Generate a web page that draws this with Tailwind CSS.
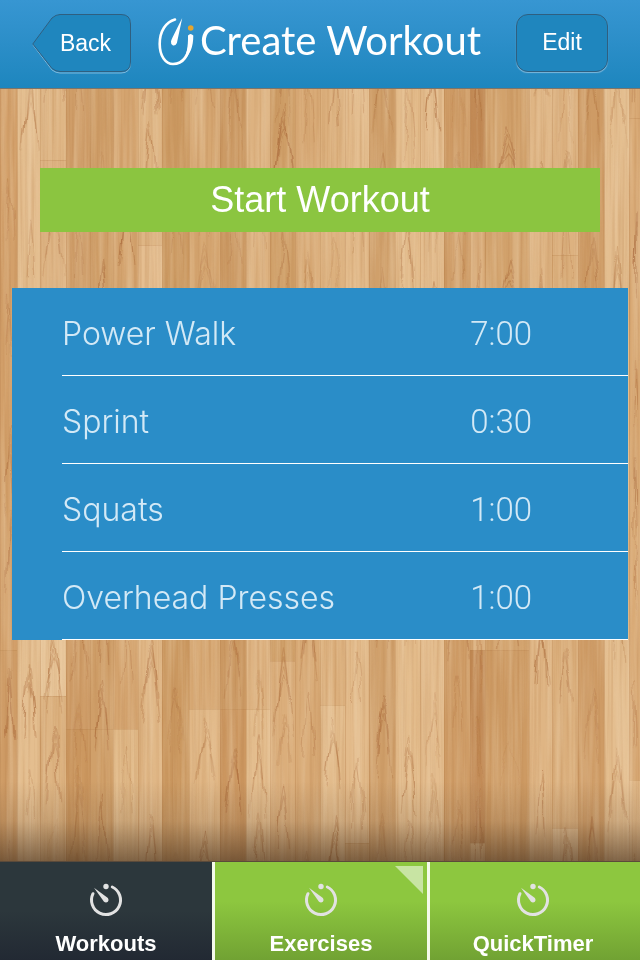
<!DOCTYPE html>
<html lang="en">
<head>
<meta charset="utf-8">
<meta name="viewport" content="width=device-width, initial-scale=1">
<title>Create Workout</title>
<script src="https://cdn.jsdelivr.net/npm/@tailwindcss/browser@4"></script>
</head>
<body class="relative isolate flex min-h-screen flex-col bg-[#dcb07c] font-['Liberation_Sans',Arial,sans-serif] text-white">

<!-- Wooden floor backdrop -->
<svg class="absolute inset-0 -z-10 h-full w-full" viewBox="0 0 640 960" preserveAspectRatio="xMidYMid slice" aria-hidden="true">
  <defs>
    <filter id="fine" x="0" y="0" width="100%" height="100%" color-interpolation-filters="sRGB">
      <feTurbulence type="fractalNoise" baseFrequency="0.35 0.006" numOctaves="3" seed="4"/>
      <feColorMatrix values="0 0 0 0 0.70  0 0 0 0 0.48  0 0 0 0 0.27  0.6 0 0 0 -0.24"/>
    </filter>
    <filter id="pale" x="0" y="0" width="100%" height="100%" color-interpolation-filters="sRGB">
      <feTurbulence type="fractalNoise" baseFrequency="0.15 0.006" numOctaves="3" seed="11"/>
      <feColorMatrix values="0 0 0 0 0.94  0 0 0 0 0.84  0 0 0 0 0.70  0 0.8 0 0 -0.31"/>
    </filter>
    <filter id="warp" x="0" y="0" width="100%" height="100%">
      <feTurbulence type="fractalNoise" baseFrequency="0.05 0.025" numOctaves="2" seed="7"/>
      <feDisplacementMap in="SourceGraphic" scale="12" xChannelSelector="R" yChannelSelector="G"/>
    </filter>
  </defs>
  <g id="planks"></g>
  <g id="rings" fill="none" stroke="#a9693a" filter="url(#warp)"></g>
  <rect width="640" height="960" filter="url(#fine)"/>
  <rect width="640" height="960" filter="url(#pale)"/>
</svg>

<header class="flex h-[89px] items-start gap-[27px] border-b border-[#7d7468] bg-linear-to-b from-[#3796d2] to-[#1d86be] px-8 pt-3.5">
  <button type="button" class="relative h-[58px] w-[99px] shrink-0 pl-2 text-[23px]">
    <svg class="absolute inset-0" width="99" height="60" viewBox="0 0 99 60" aria-hidden="true">
      <path d="M1 31 L20 5 Q24 1.500 28 1.500 H89 Q98.500 1.500 98.500 11 V49 Q98.500 59 89 59 H28 Q24 59 20 56 Z" fill="none" stroke="#7db8dc" stroke-width="1"/>
      <path d="M.8 30 L20 4 Q24 .5 28 .5 H89 Q98.500 .5 98.500 10 V48 Q98.500 57.500 89 57.500 H28 Q24 57.500 20 54.500 Z" fill="#1f86be" stroke="#2f5f80" stroke-width="1"/>
    </svg>
    <span class="relative">Back</span>
  </button>
  <div class="flex flex-1 items-start gap-1">
    <svg class="mt-0.5 shrink-0" width="38" height="52" viewBox="0 0 38 52" aria-hidden="true">
      <path d="M17 3.500 C8 6 1.700 15 1.700 28 C1.700 40 7.500 48 15 48 C25 48 31 39 32.500 24" fill="none" stroke="#fff" stroke-width="2.600" stroke-linecap="round"/>
      <path d="M30 19.500 Q32.500 16.500 35.300 19.500 C35.300 31 32 39 25.500 44 C28.500 39 30.200 31 30 19.500Z" fill="#fff"/>
      <path d="M24.200 2 L18.900 27 Q17.500 30 15 29.500 Q12.500 28 13 25.500 Q13.500 23.500 14.500 21.500Z" fill="#fff"/>
      <circle cx="32.700" cy="12" r="2.800" fill="#e5a52f"/>
    </svg>
    <h1 class="font-[Lato,sans-serif] text-[40px] leading-[52px] whitespace-nowrap">Create Workout</h1>
  </div>
  <button type="button" class="h-[58px] w-[92px] shrink-0 rounded-xl border border-[#2f5f80] bg-[#1f86be] pb-0.5 text-[23px] shadow-[0_1px_1px_#7db8dc]">Edit</button>
</header>

<main class="flex-1 px-3 pt-[79px]">
  <div class="px-7">
    <button type="button" class="h-16 w-full bg-[#8bc540] text-4xl">Start Workout</button>
  </div>
  <ul class="mt-14 bg-[#2a8dc8] pl-[50px] font-[Inter,sans-serif] text-[32px] font-light text-[#d3e9f6]">
    <li class="flex h-22 items-center justify-between border-b border-white pr-24 pt-1"><span>Power Walk</span><span class="font-[Roboto,sans-serif] text-[33px]">7:00</span></li>
    <li class="flex h-22 items-center justify-between border-b border-white pr-24 pt-1"><span>Sprint</span><span class="font-[Roboto,sans-serif] text-[33px]">0:30</span></li>
    <li class="flex h-22 items-center justify-between border-b border-white pr-24 pt-1"><span>Squats</span><span class="font-[Roboto,sans-serif] text-[33px]">1:00</span></li>
    <li class="flex h-22 items-center justify-between border-b border-white pr-24 pt-1"><span>Overhead Presses</span><span class="font-[Roboto,sans-serif] text-[33px]">1:00</span></li>
  </ul>
</main>

<div class="h-20 bg-linear-to-b from-transparent via-[#4a3420]/15 to-[#4a3420]/65"></div>

<nav class="grid h-[99px] grid-cols-[212fr_218fr_210fr] border-t border-[#5b4a3a] text-[22px] font-bold">
  <a href="#workouts" aria-current="page" class="flex flex-col items-center bg-linear-to-b from-[#2c373c] from-50% to-[#222933] pt-[18px]">
    <svg width="40" height="40" viewBox="0 0 40 40" aria-hidden="true"><use href="#timer"/></svg>
    <span class="mt-2.5 leading-7">Workouts</span>
  </a>
  <a href="#exercises" class="relative flex flex-col items-center border-x-[3px] border-[#f4faea] bg-linear-to-b from-[#8dc73f] from-40% to-[#71a233] pt-[18px]">
    <svg width="40" height="40" viewBox="0 0 40 40" aria-hidden="true"><use href="#timer"/></svg>
    <span class="mt-2.5 leading-7">Exercises</span>
    <svg class="absolute top-1 right-1" width="28" height="28" viewBox="0 0 28 28" aria-hidden="true"><path d="M0 0H28V28Z" fill="#c8e4a3"/></svg>
  </a>
  <a href="#quicktimer" class="flex flex-col items-center bg-linear-to-b from-[#8dc73f] from-40% to-[#71a233] pt-[18px] pr-1">
    <svg width="40" height="40" viewBox="0 0 40 40" aria-hidden="true"><use href="#timer"/></svg>
    <span class="mt-2.5 leading-7">QuickTimer</span>
  </a>
</nav>

<svg class="absolute" width="0" height="0" aria-hidden="true">
  <symbol id="timer" viewBox="0 0 40 40">
    <path d="M26.300 7 A14.500 14.500 0 1 1 7 13.700" fill="none" stroke="#e2e2e2" stroke-width="3" stroke-linecap="round"/>
    <circle cx="20" cy="6.500" r="2.700" fill="#e2e2e2"/>
    <path d="M8 7.800 L21.900 18 Q23.300 20 21.900 21.700 Q20 23.200 18 21.700Z" fill="#e2e2e2"/>
  </symbol>
</svg>

<script>
  // Each plank: left edge, right edge, then [bottom of board, colour] pairs.
  const planks = [
    [0, 17, [650, '#d3a06a'], [960, '#cf9c66']],
    [17, 40, [960, '#e4be8f']],
    [40, 66, [160, '#dfb685'], [400, '#ddb281'], [696, '#e8c598'], [960, '#dcb17e']],
    [66, 90, [729, '#cf9d68'], [960, '#cc9860']],
    [90, 113, [729, '#cf9e68'], [960, '#d0a06a']],
    [113, 138, [729, '#d5a570'], [960, '#e1b987']],
    [138, 162, [245, '#dfb685'], [560, '#e5be90'], [960, '#e0b786']],
    [162, 189, [960, '#cc9a62']],
    [189, 220, [709, '#d6a772'], [960, '#e0b684']],
    [220, 246, [709, '#cc9a64'], [960, '#cc9760']],
    [246, 270, [709, '#ddb280'], [960, '#e3bc8c']],
    [270, 295, [661, '#d0a069'], [960, '#dbae7b']],
    [295, 320, [960, '#d9ab77']],
    [320, 345, [705, '#dcb07d'], [960, '#e3bc8c']],
    [345, 369, [843, '#e3bb8b'], [960, '#d9ac78']],
    [369, 395, [960, '#d0a06b']],
    [395, 420, [960, '#e3bb8a']],
    [420, 444, [960, '#e4bd8e']],
    [444, 470, [960, '#cf9c66']],
    [470, 485, [190, '#c28a55'], [650, '#d9ab78'], [843, '#c28a55'], [960, '#dfb583']],
    [485, 529, [650, '#d2a26c'], [960, '#cd9a63']],
    [529, 552, [960, '#dfb584']],
    [552, 578, [255, '#ddb280'], [828, '#dbaf7c'], [960, '#e5c093']],
    [578, 604, [960, '#ce9b65']],
    [604, 629, [960, '#e4be8f']],
    [629, 640, [118, '#d9aa76'], [780, '#d9aa76'], [960, '#e2ba8a']],
  ];
  const NS = 'http://www.w3.org/2000/svg';
  const add = (parent, tag, attrs) => {
    const el = document.createElementNS(NS, tag);
    for (const k in attrs) el.setAttribute(k, attrs[k]);
    document.getElementById(parent).appendChild(el);
  };
  let seed = 9;
  const rnd = () => (seed = (seed * 16807) % 2147483647) / 2147483647;
  for (const [l, r, ...boards] of planks) {
    let top = 0;
    for (const [bottom, fill] of boards) {
      add('planks', 'rect', { x: l, y: top, width: r - l + 1, height: bottom - top, fill });
      if (top) add('planks', 'rect', { x: l, y: top, width: r - l, height: 1, fill: '#b5804c', opacity: .3 });
      top = bottom;
    }
    add('planks', 'rect', { x: l, y: 0, width: 1, height: 960, fill: '#b27a45', opacity: .3 });
    const c = (l + r) / 2 + 1, w = (r - l) / 2 - 3;
    for (let y = rnd() * 80; y < 960; y += 60 + rnd() * 120) {
      const n = 1 + Math.floor(rnd() * 4), o = .15 + rnd() * .3;
      for (let i = 0; i < n; i++) {
        const h = 40 + rnd() * 30, s = w * (.5 + i * .14), t = y + i * 9;
        add('rings', 'path', {
          d: `M${c - s} ${t + h} Q${c - s * .6} ${t + h * .3} ${c} ${t} Q${c + s * .6} ${t + h * .3} ${c + s} ${t + h}`,
          'stroke-width': .7 + rnd() * .7, opacity: o
        });
      }
    }
  }
</script>
</body>
</html>
